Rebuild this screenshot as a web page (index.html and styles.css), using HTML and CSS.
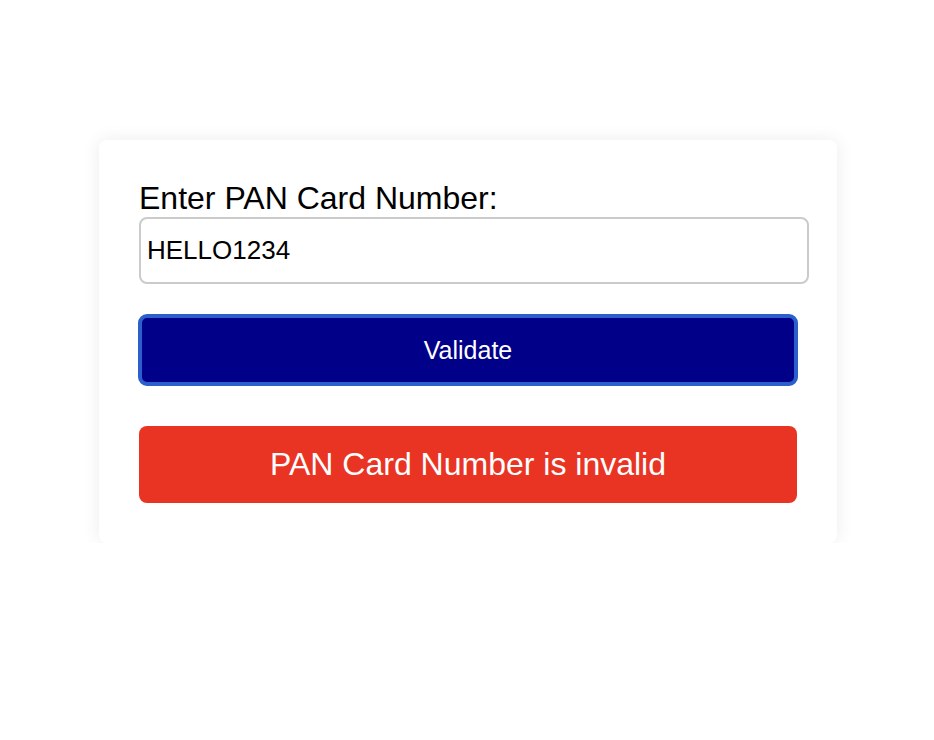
FILE: index.html
```html
<!DOCTYPE html>
<html lang="en">
<head>
<meta charset="utf-8">
<title>PAN Card Validator</title>
<link rel="stylesheet" href="styles.css">
</head>
<body>
<main class="page">
  <section class="card">
    <label class="label" for="pan">Enter PAN Card Number:</label>
    <input class="input" id="pan" type="text" value="HELLO1234">
    <button class="btn" type="button">Validate</button>
    <div class="result">PAN Card Number is invalid</div>
  </section>
</main>
</body>
</html>
```
FILE: styles.css
```css
html, body {
  margin: 0;
  padding: 0;
  background: #ffffff;
}
body {
  font-family: "Liberation Sans", Arial, Helvetica, sans-serif;
  color: #000;
}
.page {
  display: flex;
  justify-content: center;
  padding-top: 140px;
  padding-left: 2px;
}
.card {
  width: 738px;
  box-sizing: border-box;
  padding: 40px;
  background: #fff;
  border-radius: 8px;
  box-shadow: 0 0 18px rgba(0, 0, 0, 0.08);
  display: flex;
  flex-direction: column;
}
.label {
  font-size: 32px;
  line-height: 37px;
  display: block;
}
.input {
  box-sizing: border-box;
  width: calc(100% + 12px);
  height: 67px;
  padding: 0 6px;
  font-family: "Liberation Sans", Arial, sans-serif;
  font-size: 26px;
  color: #000;
  border: 2px solid #cbcbcb;
  border-radius: 8px;
  outline: none;
  background: #fff;
}
.btn {
  box-sizing: border-box;
  margin-top: 30px;
  width: calc(100% + 2px);
  margin-left: -1px;
  height: 72px;
  background: #000088;
  color: #fff;
  border: 4px solid #2b5fcc;
  border-radius: 9px;
  font-family: "Liberation Sans", Arial, sans-serif;
  font-size: 25px;
  cursor: pointer;
}
.result {
  margin-top: 40px;
  height: 77px;
  display: flex;
  align-items: center;
  justify-content: center;
  background: #e93424;
  color: #fff;
  border-radius: 8px;
  font-size: 32px;
}
```
